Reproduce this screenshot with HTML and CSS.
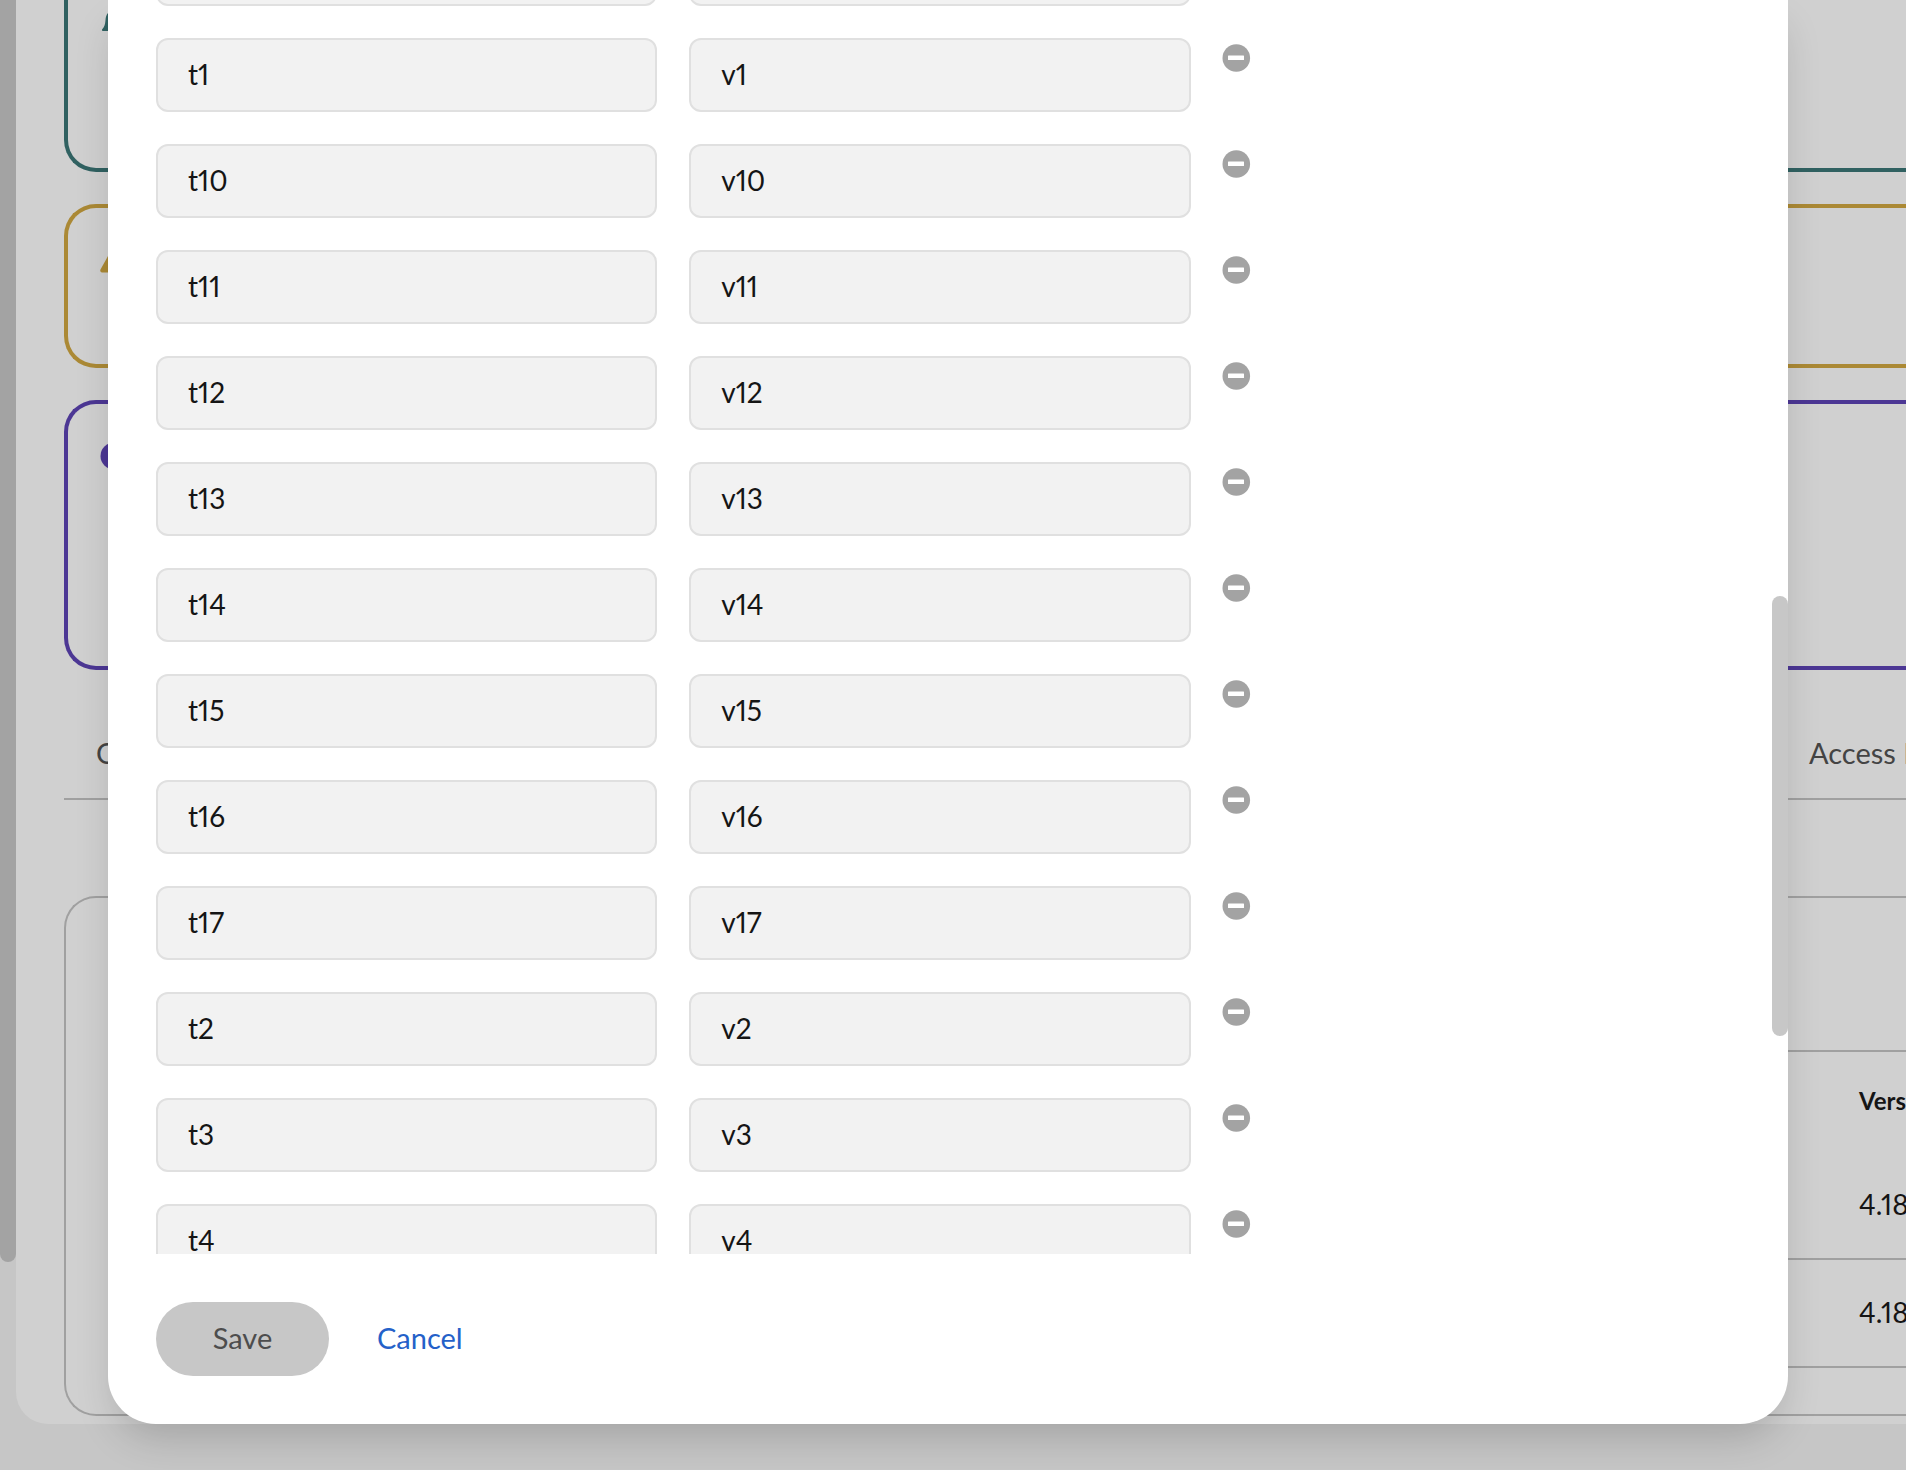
FILE: index.html
```html
<!DOCTYPE html>
<html lang="en">
<head>
  <meta charset="UTF-8">
  <title>Edit tags</title>
  <link rel="stylesheet" href="styles.css">
</head>
<body>
  <div class="page">
    <div class="page-scroll"></div>
    <main class="panel">
      <section class="alert alert-teal">
        <svg class="alert-icon" viewBox="0 0 28 28" aria-hidden="true"><path d="M14 3c-2.500 0-4 3.500-6 6-1.500 1.500-2.300 3.500-2.600 8-.3 3.500-1 6-3.200 8.200-.5.800 0 1.800.8 1.800h22c.8 0 1.300-1 .8-1.800-2.200-2.200-2.900-4.700-3.200-8.200-.3-4.500-1.100-6.500-2.600-8-2-2.500-3.500-6-6-6z"/></svg>
      </section>
      <section class="alert alert-gold">
        <svg class="alert-icon" viewBox="0 0 28 28" aria-hidden="true"><path d="M12.200 2.500c.8-1.400 2.800-1.400 3.600 0l11.700 21c.7 1.400 0 3-1.500 3H2c-1.500 0-2.200-1.600-1.500-3z"/></svg>
      </section>
      <section class="alert alert-purple">
        <svg class="alert-icon" viewBox="0 0 28 28" aria-hidden="true"><circle cx="14" cy="14" r="13.500"/></svg>
      </section>

      <nav class="tabs">
        <a href="#">C</a>
        <a href="#" class="last">Access I</a>
      </nav>

      <section class="card">
        <div class="card-head"></div>
        <table>
          <thead>
            <tr><th></th><th class="version">Vers</th></tr>
          </thead>
          <tbody>
            <tr><td></td><td class="version">4.18</td></tr>
            <tr><td></td><td class="version">4.18</td></tr>
          </tbody>
        </table>
      </section>
    </main>
  </div>

  <div class="modal" role="dialog" aria-label="Edit tags">
    <div class="modal-body">
      <div class="tags" id="tags"></div>
    </div>
    <div class="modal-scroll"></div>
    <div class="modal-footer">
      <button type="button" class="btn btn-save" disabled>Save</button>
      <button type="button" class="btn btn-link">Cancel</button>
    </div>
  </div>

  <script>
    // the first row is scrolled almost out of view
    const ids = ['', '1', '10', '11', '12', '13', '14', '15', '16', '17', '2', '3', '4'];
    const tags = document.getElementById('tags');

    ids.forEach((id) => {
      const key = id ? 't' + id : '';
      const value = id ? 'v' + id : '';
      tags.insertAdjacentHTML('beforeend', `
        <div class="tag-row">
          <input type="text" aria-label="Key" value="${key}">
          <input type="text" aria-label="Value" value="${value}">
          <button type="button" class="remove" aria-label="Remove tag">
            <svg viewBox="0 0 28 28" aria-hidden="true"><circle cx="13.300" cy="14" r="13.800"/><rect x="5" y="11.500" width="16" height="4.500" rx="0.500"/></svg>
          </button>
        </div>`);
    });
  </script>
</body>
</html>
```
FILE: styles.css
```css
* {
  box-sizing: border-box;
}
body {
  margin: 0;
  height: 100vh;
  overflow: hidden;
  background-color: #c6c6c6;
  color: #151515;
  font-family: Lato, sans-serif;
  font-size: 28px;
  font-variant-numeric: proportional-nums;
  line-height: 42px;
}
button, input {
  font: inherit;
}
.page {
  display: flex;
  height: calc(100vh - 46px);
}
.page-scroll {
  width: 16px;
  margin-bottom: 162px;
  border-radius: 0 0 8px 8px;
  background-color: #a3a3a3;
}
.panel {
  flex: 1;
  min-width: 0;
  padding-left: 48px;
  overflow: hidden;
  border-radius: 0 0 0 32px;
  background-color: #d0d0d0;
}

/* alerts behind the dialog */
.alert {
  margin-bottom: 32px;
  padding: 38px 32px;
  border: 4px solid currentColor;
  border-right: 0;
  border-radius: 32px 0 0 32px;
}
.alert-teal {
  min-height: 172px;
  padding-top: 4px;
  border-top: 0;
  border-radius: 0 0 0 32px;
  color: #306161;
}
.alert-gold {
  min-height: 164px;
  color: #ab8935;
}
.alert-purple {
  min-height: 270px;
  color: #4c3794;
}
.alert-icon {
  display: block;
  width: 28px;
  height: 28px;
  fill: currentColor;
}

.tabs {
  display: flex;
  justify-content: space-between;
  margin-top: 40px;
  padding: 22px 0 24px 32px;
  border-bottom: 2px solid #a0a0a0;
  font-size: 29px;
}
.tabs a {
  color: #444;
  text-decoration: none;
  white-space: nowrap;
}
.tabs .last {
  width: 97px;
}

.card {
  margin-top: 96px;
  padding: 0 0 46px 48px;
  border: 2px solid #a0a0a0;
  border-right: 0;
  border-radius: 32px 0 0 32px;
}
.card-head {
  height: 154px;
  border-bottom: 2px solid #a0a0a0;
}
table {
  width: 100%;
  table-layout: fixed;
  border-collapse: separate;
  border-spacing: 0;
}
th, td {
  height: 108px;
  padding: 0 0 2px;
  border-bottom: 2px solid #a0a0a0;
  text-align: left;
}
th {
  height: 100px;
  border-bottom: 0;
  font-size: 24px;
}
.version {
  width: 47px;
}

/* dialog */
.modal {
  position: absolute;
  top: 0;
  left: 108px;
  right: 118px;
  bottom: 46px;
  display: flex;
  flex-direction: column;
  border-radius: 0 0 48px 48px;
  background-color: #fff;
  box-shadow: 0 20px 40px -8px rgba(0, 0, 0, 0.18);
}
.modal-body {
  flex: 1;
  min-height: 0;
  padding: 0 64px 0 48px;
  overflow: hidden;
}
.tags {
  display: grid;
  gap: 32px;
  margin-top: -68px;
}
.tag-row {
  display: grid;
  grid-template-columns: repeat(3, 1fr);
  gap: 32px;
}
.tag-row input {
  width: 100%;
  min-width: 0;
  height: 74px;
  padding: 0 30px 2px;
  border: 2px solid #e0e0e0;
  border-radius: 12px;
  background-color: #f2f2f2;
  color: #151515;
  font-variant-numeric: proportional-nums;
}
.remove {
  width: 28px;
  height: 28px;
  margin-top: 6px;
  padding: 0;
  border: 0;
  background: none;
  cursor: pointer;
}
.remove svg {
  display: block;
  overflow: visible;
}
.remove circle {
  fill: #a3a3a3;
}
.remove rect {
  fill: #fff;
}
.modal-scroll {
  position: absolute;
  top: 596px;
  right: 0;
  width: 16px;
  height: 440px;
  border-radius: 8px;
  background-color: #c7c7c7;
}
.modal-footer {
  display: flex;
  gap: 48px;
  padding: 48px;
}
.btn {
  height: 74px;
  padding: 0 56px 2px;
  border: 0;
  border-radius: 37px;
  font-size: 29px;
}
.btn-save {
  min-width: 173px;
  background-color: #c7c7c7;
  color: #4d4d4d;
}
.btn-link {
  padding: 0 0 2px;
  background: none;
  color: #2461c9;
  cursor: pointer;
}
```
